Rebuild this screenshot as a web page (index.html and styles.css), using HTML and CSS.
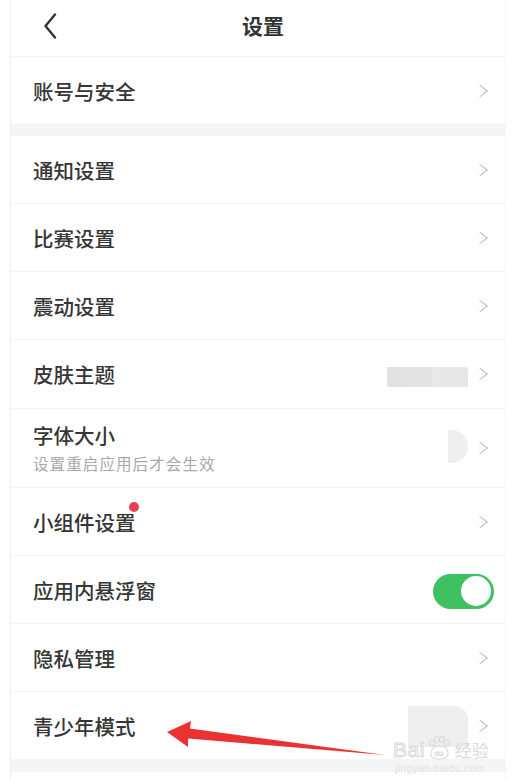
FILE: index.html
```html
<!DOCTYPE html>
<html lang="zh-CN">
<head>
<meta charset="utf-8">
<title>设置</title>
<link rel="stylesheet" href="styles.css">
</head>
<body>
<div class="phone">
  <header class="topbar">
    <svg class="back" width="14" height="26" viewBox="0 0 14 26"><path d="M12 1.5 L2.5 13 L12 24.5" fill="none" stroke="#333" stroke-width="2.4" stroke-linecap="round" stroke-linejoin="round"/></svg>
    <h1 class="title">设置</h1>
  </header>

  <div class="row"><span class="label">账号与安全</span><span class="chev"></span></div>
  <div class="band"></div>

  <div class="row"><span class="label">通知设置</span><span class="chev"></span></div>
  <div class="row"><span class="label">比赛设置</span><span class="chev"></span></div>
  <div class="row"><span class="label">震动设置</span><span class="chev"></span></div>
  <div class="row row-skin"><span class="label">皮肤主题</span><span class="smudge-rect"></span><span class="chev"></span></div>
  <div class="row row-tall">
    <div class="stack"><span class="label">字体大小</span><span class="sub">设置重启应用后才会生效</span></div>
    <span class="smudge-half"></span><span class="chev"></span>
  </div>
  <div class="row"><span class="label with-dot">小组件设置<i class="dot"></i></span><span class="chev"></span></div>
  <div class="row"><span class="label">应用内悬浮窗</span><span class="switch"><span class="knob"></span></span></div>
  <div class="row"><span class="label">隐私管理</span><span class="chev"></span></div>
  <div class="row row-last"><span class="label">青少年模式</span><span class="smudge-block"></span><span class="chev"></span></div>
  <div class="band band-bottom"></div>
</div>

<svg class="arrow" width="515" height="780" viewBox="0 0 515 780">
  <polygon points="167,732 191,721 190,728.5 385,755 188,738.5 188,747" fill="#ea3232"/>
</svg>

<div class="watermark">
  <div class="wm-line">
    <span class="wm-bai">Bai</span>
    <svg class="paw" width="26" height="24" viewBox="0 0 26 24">
      <g fill="none" stroke="#dcdcdc" stroke-width="1.2">
        <ellipse cx="6" cy="7" rx="2.6" ry="3.2"/>
        <ellipse cx="11" cy="3.5" rx="2.4" ry="3"/>
        <ellipse cx="16" cy="3.5" rx="2.4" ry="3"/>
        <ellipse cx="21" cy="7" rx="2.6" ry="3.2"/>
        <path d="M5 18 C5 12 9 10 13.5 10 C18 10 22 12 22 18 C22 22 18 23 13.5 23 C9 23 5 22 5 18 Z"/>
      </g>
      <text x="8.5" y="20" font-size="8" fill="none" stroke="#dcdcdc" stroke-width="0.6" font-family="Liberation Sans, sans-serif">du</text>
    </svg>
    <span class="wm-cn">经验</span>
  </div>
  <div class="wm-url">jingyan.baidu.com</div>
</div>
</body>
</html>
```

FILE: styles.css
```css
* { box-sizing: border-box; }

html, body {
  margin: 0;
  padding: 0;
  background: #ffffff;
}

body {
  width: 515px;
  height: 780px;
  overflow: hidden;
  position: relative;
  font-family: "Noto Sans CJK SC", "Noto Sans", sans-serif;
  color: #333333;
}

.phone {
  margin-left: 10px;
  width: 496px;
  min-height: 780px;
  border-left: 1.5px solid #eeeeee;
  border-right: 1px solid #f6f6f6;
  display: flex;
  flex-direction: column;
}

.topbar {
  height: 57px;
  flex: 0 0 57px;
  display: flex;
  align-items: center;
  position: relative;
  border-bottom: 1px solid #f3f3f3;
}

.back {
  margin-left: 32px;
  margin-top: -4px;
}

.title {
  margin: 0;
  position: absolute;
  left: 0;
  right: 0;
  top: 9px;
  text-align: center;
  padding-left: 10px;
  font-size: 21px;
  font-weight: 700;
  line-height: 32px;
  color: #333;
  pointer-events: none;
}

.row {
  height: 68px;
  flex: 0 0 68px;
  display: flex;
  align-items: center;
  padding: 0 18px 0 22px;
  border-bottom: 1px solid #f2f2f2;
}

.row-skin { height: 69px; flex-basis: 69px; }

.row-tall { height: 79px; flex-basis: 79px; }

.row-last { border-bottom: none; height: 67px; flex-basis: 67px; }

.label {
  font-size: 20.5px;
  font-weight: 500;
  line-height: 28px;
  color: #363636;
  margin-right: auto;
}

.with-dot { position: relative; }

.dot {
  position: absolute;
  left: 96px;
  top: -6px;
  width: 10px;
  height: 10px;
  border-radius: 50%;
  background: #e8404c;
}

.stack {
  display: flex;
  flex-direction: column;
  margin-right: auto;
  margin-top: -2px;
}

.stack .label { margin-right: 0; }

.sub {
  font-size: 15.5px;
  line-height: 22px;
  letter-spacing: 1.1px;
  color: #a8a8a8;
  margin-top: 3px;
}

.chev {
  width: 10px;
  height: 16px;
  flex: 0 0 10px;
  position: relative;
}

.chev::before {
  content: "";
  position: absolute;
  left: -2px;
  top: 3px;
  width: 9px;
  height: 9px;
  border-top: 1.5px solid #b8b8b8;
  border-right: 1.5px solid #b8b8b8;
  transform: rotate(45deg) skew(-6deg, -6deg);
}

.smudge-rect {
  width: 81px;
  height: 20px;
  margin-top: 5px;
  margin-right: 9px;
  background: linear-gradient(90deg, #e2e2e2 0%, #e4e4e4 55%, #e9e9e9 56%, #e6e6e6 100%);
  border-radius: 1px 3px 2px 1px;
}

.smudge-half {
  width: 20px;
  height: 33px;
  margin-top: -4px;
  margin-right: 9px;
  background: #efefef;
  border-radius: 0 17px 17px 0;
}

.smudge-block {
  width: 60px;
  height: 41px;
  margin-top: 2px;
  margin-right: 9px;
  background: #eeeeee;
  border-radius: 0 14px 0 0;
}

.switch {
  width: 61px;
  height: 35px;
  border-radius: 18px;
  background: #3ec261;
  position: relative;
  margin-right: -7px;
  margin-top: 3px;
}

.knob {
  position: absolute;
  right: 3px;
  top: 2.5px;
  width: 30px;
  height: 30px;
  border-radius: 50%;
  background: #ffffff;
}

.band {
  height: 11px;
  flex: 0 0 11px;
  background: #f5f5f6;
}

.band-bottom {
  height: 13px;
  flex: 0 0 13px;
}

.arrow {
  position: absolute;
  left: 0;
  top: 0;
  pointer-events: none;
}

.watermark {
  position: absolute;
  left: 393px;
  top: 736px;
  display: flex;
  flex-direction: column;
  align-items: flex-start;
  pointer-events: none;
}

.wm-line {
  display: flex;
  align-items: flex-end;
  gap: 1px;
}

.wm-bai {
  font-family: "Liberation Sans", sans-serif;
  font-size: 21px;
  line-height: 22px;
  color: rgba(255, 255, 255, 0.5);
  -webkit-text-stroke: 1px #d9d9d9;
  letter-spacing: 0.5px;
}

.paw { margin-bottom: 1px; }

.wm-cn {
  font-size: 17px;
  line-height: 22px;
  color: #dadada;
  margin-left: 2px;
}

.wm-url {
  font-family: "Liberation Sans", sans-serif;
  font-size: 10.5px;
  line-height: 14px;
  color: #e2e2e2;
  margin-left: 2px;
  letter-spacing: 0.3px;
}
```
